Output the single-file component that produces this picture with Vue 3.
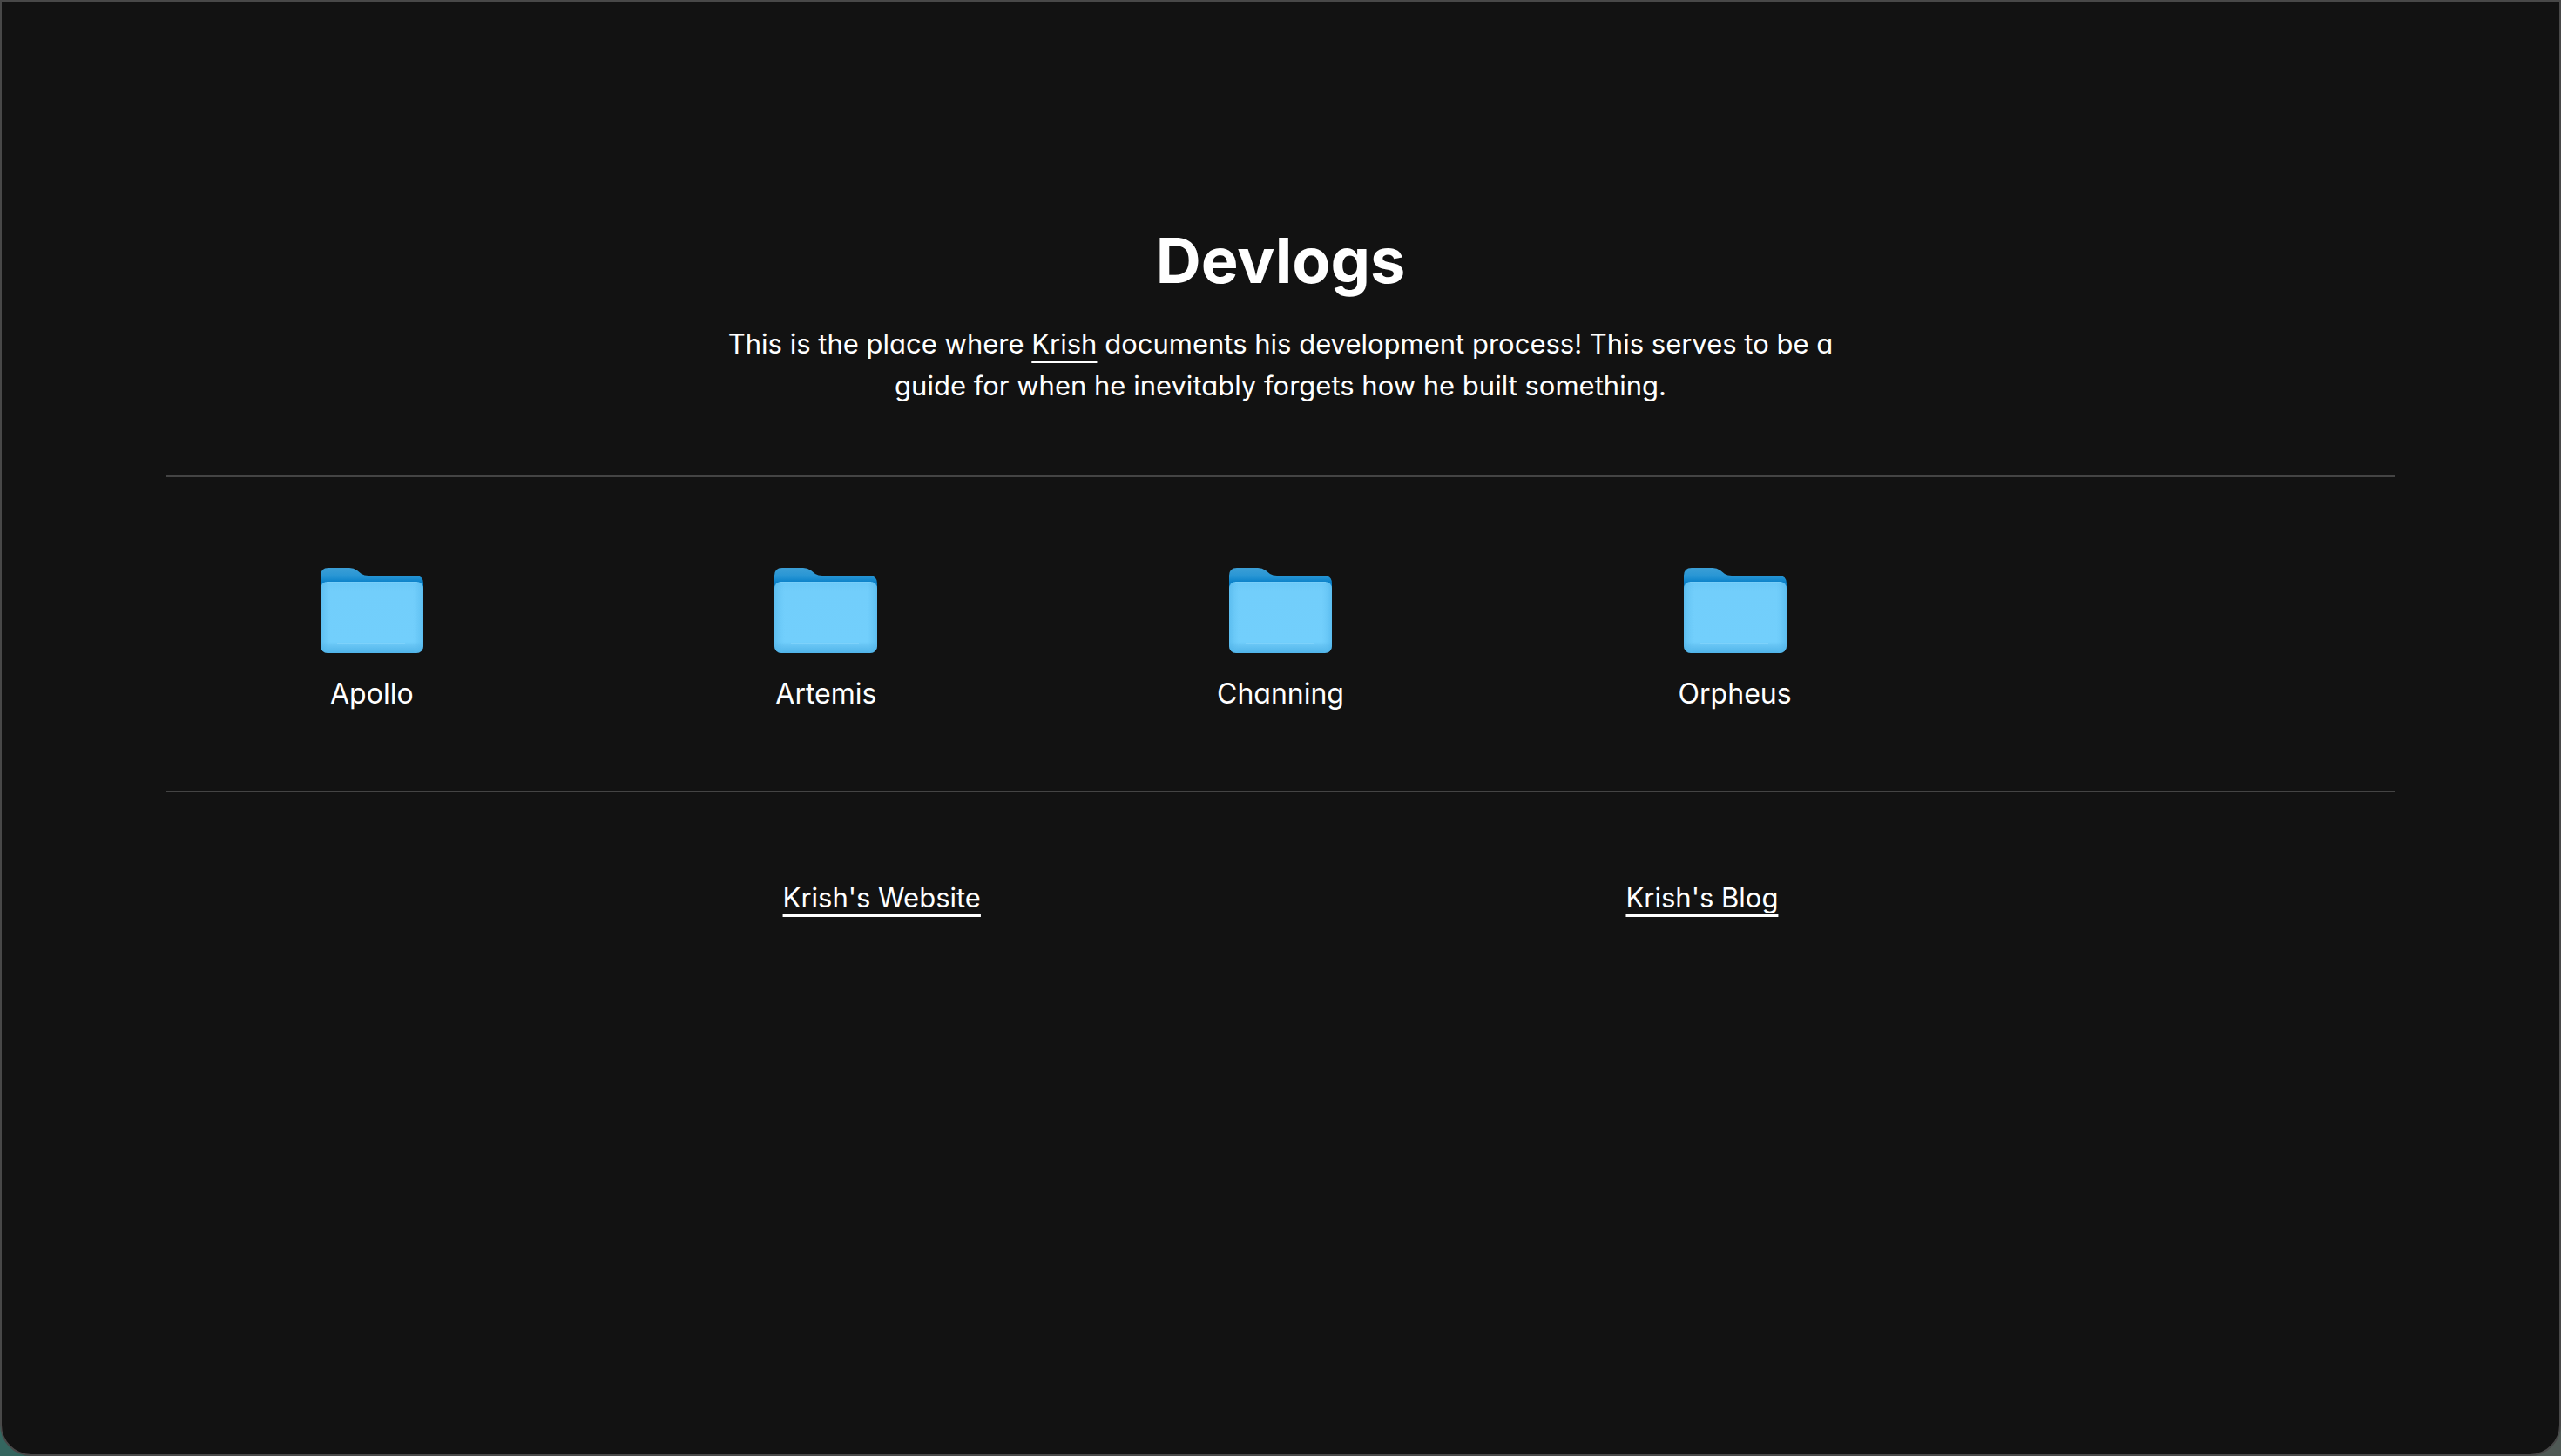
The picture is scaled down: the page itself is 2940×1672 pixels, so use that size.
<script setup>
const folders = ['Apollo', 'Artemis', 'Channing', 'Orpheus']
const links = ["Krish's Website", "Krish's Blog"]
</script>

<template>
  <div class="window">
    <div class="page">
      <header class="intro">
        <h1>Devlogs</h1>
        <p>
          This is the place where <a href="#krish">Krish</a> documents his development process! This
          serves to be a guide for when he inevitably forgets how he built something.
        </p>
      </header>

      <main class="folders">
        <a v-for="name in folders" :key="name" class="folder" :href="'#' + name.toLowerCase()">
          <svg class="icon" viewBox="0 0 120 102" aria-hidden="true">
            <defs>
              <linearGradient id="back" gradientUnits="userSpaceOnUse" x1="0" y1="2" x2="0" y2="20">
                <stop offset="0" stop-color="#3c9fd6" />
                <stop offset="0.55" stop-color="#2795d4" />
                <stop offset="0.9" stop-color="#0b82ca" />
                <stop offset="1" stop-color="#0a7cc2" />
              </linearGradient>
              <linearGradient id="front" x1="0" y1="0" x2="0" y2="1">
                <stop offset="0" stop-color="#6ac8f8" />
                <stop offset="0.14" stop-color="#72cefb" />
                <stop offset="0.84" stop-color="#72cffc" />
                <stop offset="0.9" stop-color="#65c3f3" />
                <stop offset="1" stop-color="#4fb3e8" />
              </linearGradient>
              <linearGradient id="sides" x1="0" y1="0" x2="1" y2="0">
                <stop offset="0" stop-color="#4db2e8" stop-opacity="0.6" />
                <stop offset="0.1" stop-color="#5fc0f2" stop-opacity="0" />
                <stop offset="0.9" stop-color="#5fc0f2" stop-opacity="0" />
                <stop offset="1" stop-color="#4db2e8" stop-opacity="0.6" />
              </linearGradient>
            </defs>
            <path
              d="M1 11 Q1 2 10 2 H34 Q39 2 43 5 L48 9 Q51 11 56 11 H110 Q119 11 119 20 V60 H1 Z"
              fill="url(#back)"
            />
            <rect x="1" y="18" width="118" height="82" rx="8" fill="url(#front)" />
            <rect x="1" y="18" width="118" height="82" rx="8" fill="url(#sides)" />
            <path d="M8 18.5 H112" stroke="#8fd8fb" stroke-opacity="0.4" />
            <path d="M20 88.5 H98" stroke="#8ddafd" stroke-opacity="0.5" />
          </svg>
          <span>{{ name }}</span>
        </a>
      </main>

      <footer class="links">
        <a v-for="label in links" :key="label" href="#">{{ label }}</a>
      </footer>
    </div>
  </div>
</template>

<style>
body {
  background: linear-gradient(90deg, #34665f 0, #34665f 50%, #4f5955 50%, #4f5955 100%);
}
</style>

<style scoped>
.window {
  box-sizing: border-box;
  min-height: 100vh;
  border: 2px solid #484848;
  border-radius: 0 0 36px 36px;
  background: #121212;
  color: #fff;
  font-family: Inter, 'Liberation Sans', sans-serif;
  font-size: 32px;
  line-height: 48px;
  font-feature-settings: 'cv11';
}

.page {
  max-width: 2560px;
  margin: 0 auto;
  padding: 257px 32px 96px;
}

@media (min-width: 2640px) {
  .page {
    padding-left: 0;
    padding-right: 0;
  }
}

.intro {
  padding-bottom: 79px;
  border-bottom: 2px solid #444;
  text-align: center;
}

h1 {
  margin: 0 0 32px;
  font-size: 72px;
  line-height: 80px;
  font-weight: 700;
}

p {
  max-width: 1280px;
  margin: 0 auto;
  font-size: 31px;
}

a {
  color: inherit;
  text-decoration: underline;
  text-decoration-thickness: 3px;
  text-underline-offset: 8px;
  text-decoration-skip-ink: none;
}

.folders {
  display: grid;
  grid-template-columns: repeat(5, 1fr);
  gap: 48px;
  padding: 102px 0 87px;
  border-bottom: 2px solid #444;
}

.folder {
  display: flex;
  flex-direction: column;
  align-items: center;
  gap: 21px;
  text-decoration: none;
}

.icon {
  width: 120px;
  height: 102px;
}

.links {
  display: flex;
  flex-wrap: wrap;
  justify-content: space-evenly;
  gap: 32px;
  padding-top: 97px;
  font-size: 31px;
}
</style>
